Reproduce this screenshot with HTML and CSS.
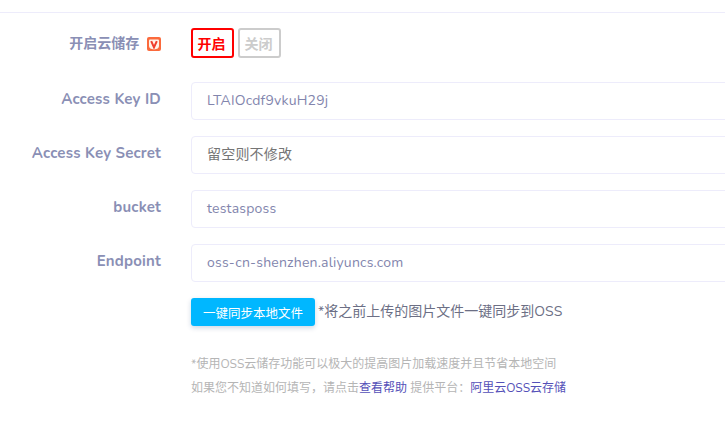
FILE: index.html
```html
<!DOCTYPE html>
<html lang="zh-CN">
<head>
<meta charset="utf-8">
<title>云存储设置</title>
<link rel="stylesheet" href="styles.css">
</head>
<body>
<div class="panel">
  <div class="form">
    <div class="row row-switch">
      <div class="label label-cn">开启云储存
        <svg class="vip" width="14" height="14" viewBox="0 0 14 14" aria-hidden="true">
          <rect x="0" y="0" width="14" height="14" rx="2" fill="#fb6a3c"/>
          <path d="M2 3.5 Q2 2.5 3 2.5 H11 Q12 2.5 12 3.5 V9 Q12 12 7 12.5 Q2 12 2 9 Z" fill="#fff4ea"/>
          <path d="M4.2 4.2 L7 10.4 L9.8 4.2" fill="none" stroke="#ef3e2c" stroke-width="2"/>
        </svg>
      </div>
      <div class="switches">
        <button class="tag tag-on">开启</button>
        <button class="tag tag-off">关闭</button>
      </div>
    </div>
    <div class="row">
      <div class="label">Access Key ID</div>
      <div class="field">LTAIOcdf9vkuH29j</div>
    </div>
    <div class="row">
      <div class="label">Access Key Secret</div>
      <div class="field field-ph">留空则不修改</div>
    </div>
    <div class="row">
      <div class="label">bucket</div>
      <div class="field">testasposs</div>
    </div>
    <div class="row">
      <div class="label">Endpoint</div>
      <div class="field">oss-cn-shenzhen.aliyuncs.com</div>
    </div>
    <div class="row row-sync">
      <div class="label"></div>
      <div class="sync">
        <button class="sync-btn">一键同步本地文件</button>
        <span class="sync-text">*将之前上传的图片文件一键同步到OSS</span>
      </div>
    </div>
    <div class="row row-notes">
      <div class="label"></div>
      <div class="notes">
        <p>*使用OSS云储存功能可以极大的提高图片加载速度并且节省本地空间</p>
        <p>如果您不知道如何填写，请点击<a href="#">查看帮助</a> 提供平台：<a href="#">阿里云OSS云存储</a></p>
      </div>
    </div>
  </div>
</div>
</body>
</html>
```

FILE: styles.css
```css
* { box-sizing: border-box; }
html, body { margin: 0; padding: 0; }
body {
  width: 725px;
  height: 422px;
  overflow: hidden;
  background: #fff;
  font-family: "Nunito", "Lato", "Noto Sans CJK SC", sans-serif;
}
.panel { padding-top: 12px; }
.form { border-top: 1px solid #edecfb; padding-top: 15px; }
.row { display: flex; margin-bottom: 16px; }
.row-switch { margin-bottom: 24px; height: 30px; }
.label {
  width: 161px;
  flex: none;
  margin-right: 30px;
  text-align: right;
  font-size: 15px;
  font-weight: 700;
  color: #8a8fb5;
  line-height: 35px;
  letter-spacing: 0.2px;
}
.label-cn { line-height: 28px; padding-top: 2px; font-size: 14px; letter-spacing: 0; }
.vip { vertical-align: -3px; margin-left: 4px; }
.switches { display: flex; gap: 4px; }
.tag {
  height: 30px;
  padding: 0 2px 0 0;
  background: #fff;
  border-radius: 3px;
  font: 700 14px "Noto Sans CJK SC", sans-serif;
}
.tag-on { width: 43px; border: 2px solid #f00; color: #f00; }
.tag-off { width: 43px; border: 2px solid #ccc; color: #ccc; }
.field {
  width: 640px;
  flex: none;
  height: 38px;
  border: 1px solid #edecfb;
  border-radius: 4px;
  padding: 0 15px;
  line-height: 36px;
  font-size: 14px;
  color: #8285ad;
  letter-spacing: 0.2px;
}
.field-ph { color: #757575; line-height: 35px; }
.row-sync { margin-bottom: 0; height: 28px; }
.sync { display: flex; align-items: flex-start; white-space: nowrap; }
.sync-btn {
  width: 124px;
  height: 28px;
  border: 0;
  border-radius: 3px;
  background: #00b7ff;
  color: #fff;
  font: 12.5px "Noto Sans CJK SC", sans-serif;
  padding: 0;
  box-shadow: 0 2px 5px rgba(0, 60, 120, .2);
}
.sync-text { margin-left: 3px; font-size: 14px; color: #6c6f85; line-height: 27px; }
.row-notes { margin: 0; padding-top: 26px; }
.notes { font-size: 12px; color: #b5b5b5; white-space: nowrap; }
.notes p { margin: 0; line-height: 24px; }
.notes a { color: #5450b8; text-decoration: none; }
```
